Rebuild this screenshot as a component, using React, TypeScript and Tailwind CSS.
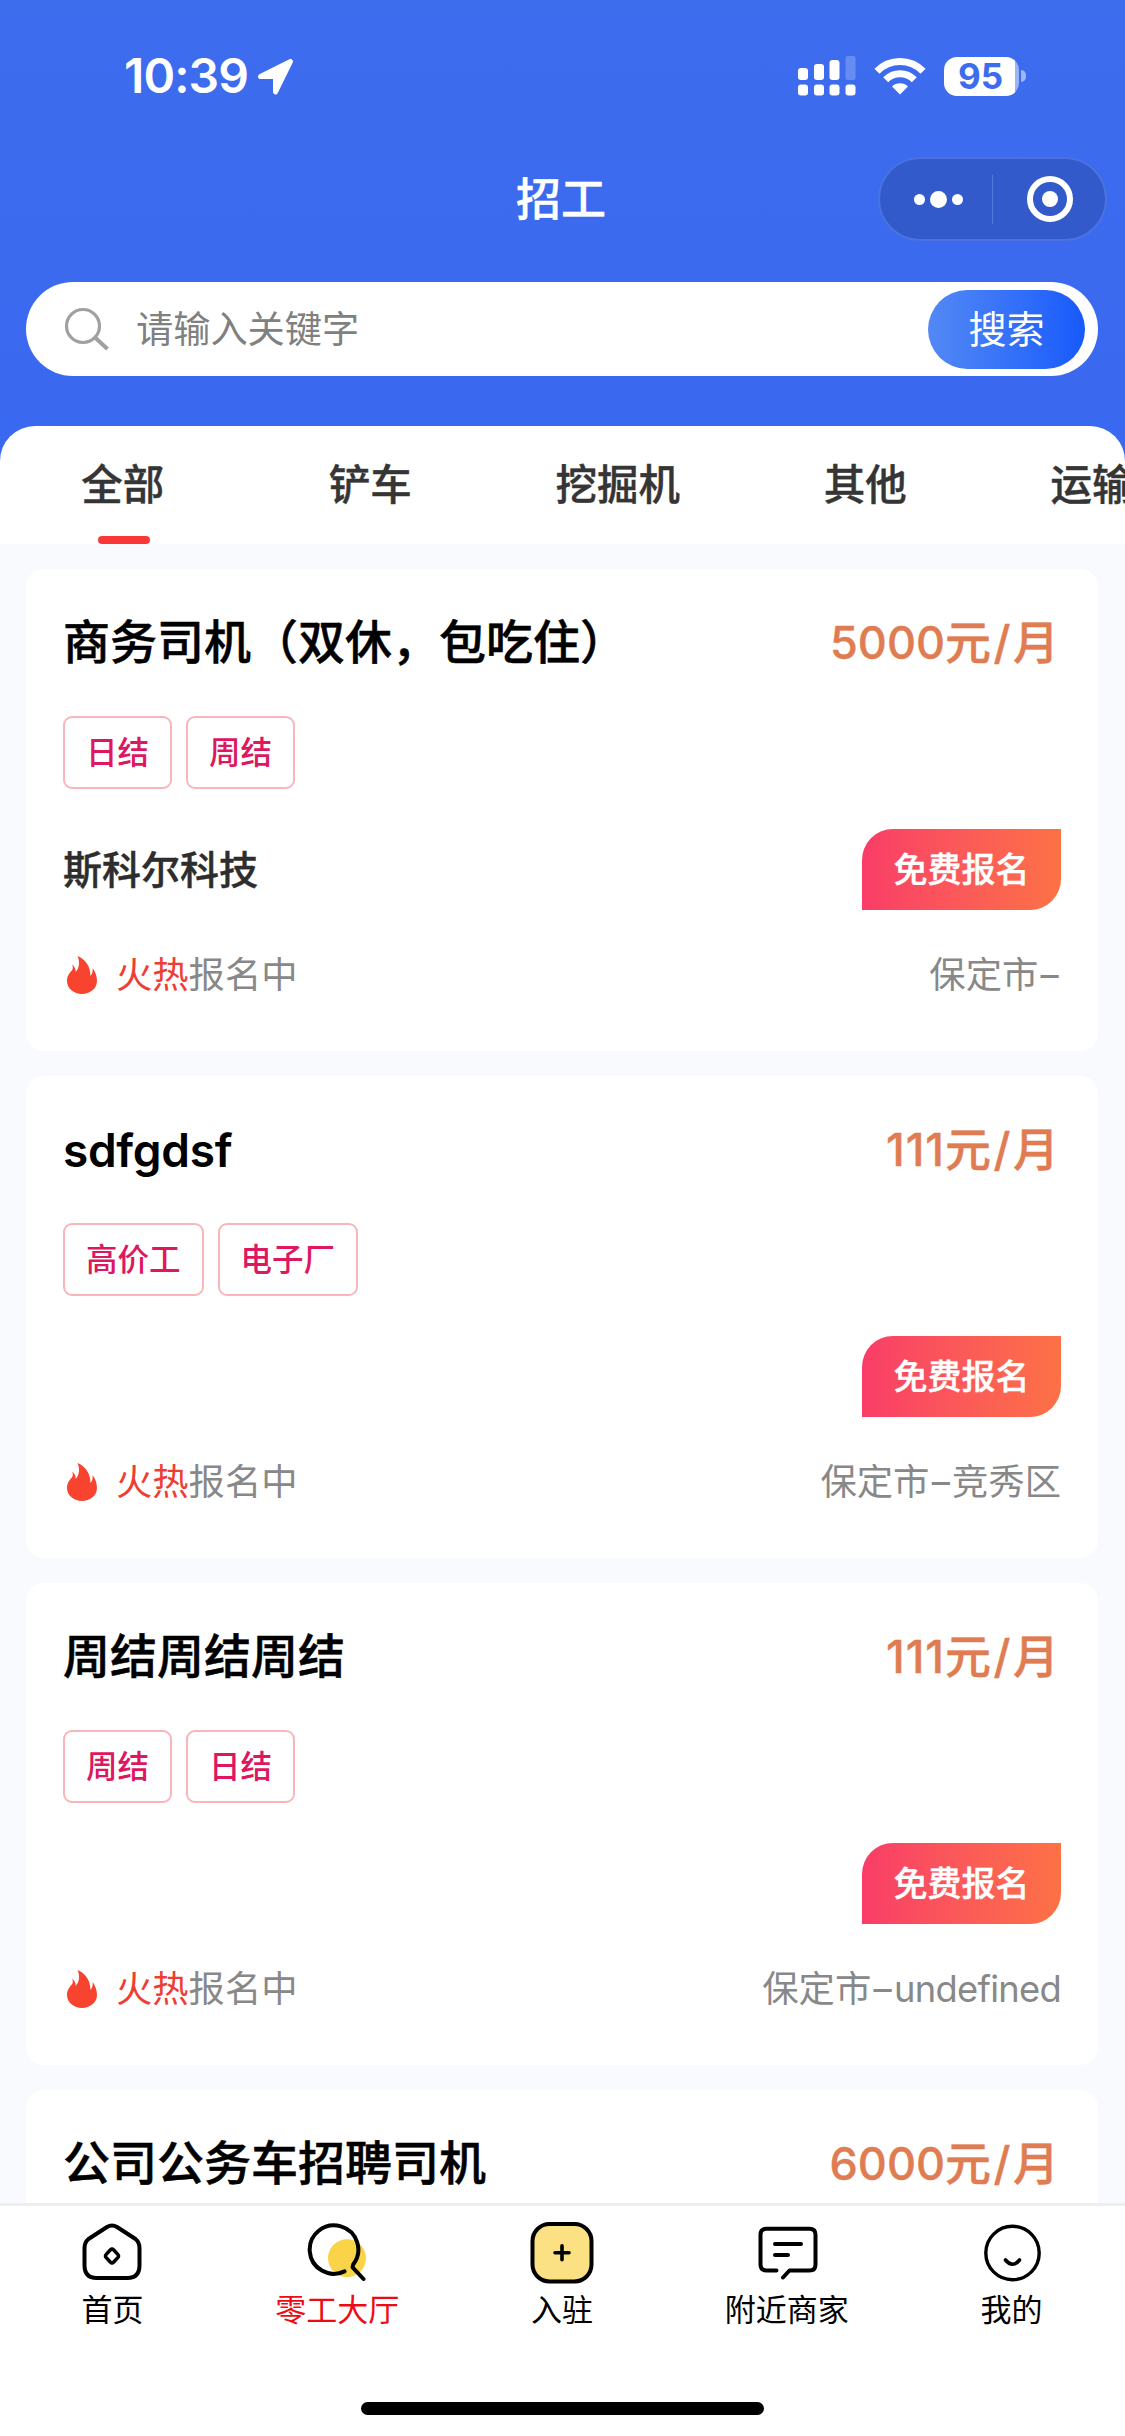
import type { ReactNode } from "react";

type Job = {
  title: string;
  amount: string;
  tags: string[];
  company: string;
  area: string;
};

const jobs: Job[] = [
  { title: "商务司机（双休，包吃住）", amount: "5000", tags: ["日结", "周结"], company: "斯科尔科技", area: "" },
  { title: "sdfgdsf", amount: "111", tags: ["高价工", "电子厂"], company: "", area: "竞秀区" },
  { title: "周结周结周结", amount: "111", tags: ["周结", "日结"], company: "", area: "undefined" },
];

const nextJob = { title: "公司公务车招聘司机", amount: "6000" };

const categories = ["全部", "铲车", "挖掘机", "其他", "运输车"];

function StatusBar() {
  return (
    <div className="flex h-[152px] items-center justify-between pl-[124px] pr-[98px]">
      <div className="flex items-center gap-[8px]">
        <span className="w-[125px] whitespace-nowrap text-[48px] leading-none font-[560] tracking-[-0.9px]">10:39</span>
        <svg width="37" height="37" viewBox="0 0 37 37" fill="#fff" stroke="#fff" strokeWidth="5" strokeLinejoin="round">
          <path d="M33.5 3.5 18.5 34V18.5H3.5Z" />
        </svg>
      </div>
      <div className="flex items-center">
        <svg width="58" height="40" viewBox="0 0 58 40" fill="#fff">
          <rect x="0" y="12" width="10" height="12" rx="3" />
          <rect x="16" y="8" width="10" height="16" rx="3" />
          <rect x="31.500" y="4" width="10" height="20" rx="3" />
          <rect x="47.500" y="0" width="10" height="24" rx="2" opacity=".22" />
          <rect x="0" y="28.500" width="10" height="11" rx="3" />
          <rect x="16" y="28.500" width="10" height="11" rx="3" />
          <rect x="31.500" y="28.500" width="10" height="11" rx="3" />
          <rect x="47.500" y="28.500" width="10" height="11" rx="3" />
        </svg>
        <svg className="ml-[18px]" width="52" height="38" viewBox="0 0 52 38" fill="none" stroke="#fff" strokeWidth="7">
          <path d="M3 14.300a32 32 0 0 1 46 0" />
          <path d="M11.700 22.800a20 20 0 0 1 28.600 0" />
          <path d="M18 29.600a11.500 11.500 0 0 1 16 0L26 37.500Z" fill="#fff" stroke="none" />
        </svg>
        <div className="ml-[18px] flex h-[39px] w-[75px] items-center justify-center rounded-[13px] bg-[linear-gradient(90deg,#fff_95%,#9bb4f6_95%)] pr-[2px] text-[35px] leading-none font-bold text-[#3d6cec]">95</div>
        <div className="ml-[2px] h-[12px] w-[5px] rounded-r-full bg-white/50" />
      </div>
    </div>
  );
}

function TitleBar() {
  return (
    <div className="grid h-[94px] grid-cols-3 items-center pr-[17px]">
      <div />
      <h1 className="pl-[15px] text-center text-[45px] leading-none font-medium [-webkit-text-stroke:0.4px]">招工</h1>
      <div className="flex h-[84px] w-[229px] items-center justify-self-end rounded-full border-2 border-[#4a72e0] bg-[#325aca]">
        <div className="flex w-[112px] items-center justify-center gap-[5px] pl-[5px]">
          <span className="size-[11px] rounded-full bg-white" />
          <span className="size-[17px] rounded-full bg-white" />
          <span className="size-[11px] rounded-full bg-white" />
        </div>
        <div className="h-[49px] w-px bg-[#5377da]" />
        <div className="flex flex-1 items-center justify-center pl-[2px]">
          <span className="flex size-[46px] items-center justify-center rounded-full border-[6px] border-white">
            <span className="size-[16px] rounded-full bg-white" />
          </span>
        </div>
      </div>
    </div>
  );
}

function SearchBar() {
  return (
    <div className="mx-[26px] mt-[36px] flex h-[94px] items-center rounded-full bg-white pl-[38px] pr-[13px]">
      <svg width="46" height="44" viewBox="0 0 46 44" fill="none" stroke="#a0a0a0" strokeWidth="3.200">
        <circle cx="19" cy="19" r="16.500" />
        <path d="m31 30.500 12.500 11.500" strokeWidth="4" />
      </svg>
      <span className="ml-[26px] flex-1 pt-[2px] text-[37.200px] leading-none text-[#808080]">请输入关键字</span>
      <button className="h-[79px] w-[157px] rounded-full bg-linear-to-r from-[#5388f5] to-[#1759fb] text-[38px] leading-none text-white">搜索</button>
    </div>
  );
}

function Flame() {
  return (
    <svg width="30" height="38" viewBox="0 0 30 38" fill="#f8432f">
      <path d="M10.500 0C18 3 23.500 10 23.500 20c1.700-2 2.600-5 2.100-8C28.500 16 30 20.500 30 25 30 32.500 23 38 15 38S0 32.500 0 25c0-5 2.300-7.500 4.800-10.500C6.200 12.800 6.100 10.500 5 8.500c2.500 2 4 4.500 3.700 7.500C12.500 11.500 13 5.500 10.500 0Z" />
    </svg>
  );
}

function JobHeading({ title, amount }: { title: string; amount: string }) {
  return (
    <div className="flex h-[51px] items-center justify-between pr-[2px]">
      <h2 className={/^[a-z]/.test(title) ? "whitespace-nowrap pt-[2px] text-[46px] leading-none font-[570] tracking-[-0.3px] text-black" : "whitespace-nowrap text-[47px] leading-none font-medium text-black [-webkit-text-stroke:0.5px]"}>{title}</h2>
      <span className="whitespace-nowrap text-[46px] leading-none font-medium text-[#e07c52] [-webkit-text-stroke:0.4px]">
        <span className={amount === "111" ? "text-[45px] tracking-[1px]" : "text-[45px]"}>{amount}</span>元<span className="mx-[2.500px]">/</span>月
      </span>
    </div>
  );
}

function JobCard({ job }: { job: Job }) {
  return (
    <article className="h-[482px] shrink-0 rounded-[18px] bg-white px-[37px] pt-[47px]">
      <JobHeading title={job.title} amount={job.amount} />
      <div className="mt-[49px] flex gap-[14px]">
        {job.tags.map((t) => (
          <span key={t} className="flex h-[73px] items-center rounded-[9px] border-2 border-[#f8b6ba] px-[21px] text-[31.500px] leading-none font-medium text-[#dd1760]">{t}</span>
        ))}
      </div>
      <div className="mt-[40px] flex h-[81px] items-center justify-between">
        <span className="text-[39px] leading-none font-medium text-[#2d2d2d] [-webkit-text-stroke:0.4px]">{job.company}</span>
        <button className="h-[81px] w-[199px] rounded-tl-[31px] rounded-br-[31px] bg-linear-to-r from-[#f93c67] to-[#fd7145] text-[34px] leading-none font-medium text-white [-webkit-text-stroke:0.4px]">免费报名</button>
      </div>
      <div className="mt-[42px] flex h-[46px] items-center justify-between text-[36.300px] leading-none text-[#888]">
        <div className="flex items-center pl-[4px]">
          <Flame />
          <span className="ml-[19px] text-[#f03d33]">火热</span>
          <span>报名中</span>
        </div>
        <span>
          保定市<span className="mx-[2.300px]">–</span>
          <span className={job.area === "undefined" ? "tracking-[-0.7px]" : ""}>{job.area}</span>
        </span>
      </div>
    </article>
  );
}

function HomeIcon() {
  return (
    <>
      <path d="M7.500 17 26 5q5-3 10 0L54.500 17q4 3.500 4 9V43q0 13-12 13H15.500Q3.500 56 3.500 43V26q0-5.500 4-9Z" />
      <path d="M29.500 27.700q1.500-1.600 3 0l4.300 4.700q1.400 1.600 0 3.200l-4.300 4.700q-1.500 1.600-3 0l-4.300-4.700q-1.400-1.600 0-3.200Z" strokeWidth="3.500" />
    </>
  );
}

function HallIcon() {
  return (
    <>
      <circle cx="41" cy="36.300" r="19" fill="#f9d448" stroke="none" />
      <path d="M38.500 49.400A24.300 24.200 0 1 1 47.200 42.400L46.600 45.300 57.500 57" />
    </>
  );
}

function JoinIcon() {
  return (
    <>
      <rect x="1.500" y="2" width="59" height="57.500" rx="17" fill="#fbe183" />
      <path d="M31 23.700v14M24 30.700h14" strokeWidth="3.600" />
    </>
  );
}

function ShopIcon() {
  return (
    <>
      <path d="M20.500 48.500H10.500q-6 0-6-6V12.700q0-6 6-6h43q6 0 6 6v29.800q0 6-6 6H33.500l-6.500 7" />
      <path d="M19 22h26M19 33h13" />
    </>
  );
}

function MineIcon() {
  return (
    <>
      <ellipse cx="31.500" cy="31" rx="26.700" ry="26.700" strokeWidth="3.400" />
      <path d="M24.500 38q7 8.500 14 0" strokeWidth="3.600" />
    </>
  );
}

const nav: { label: string; icon: ReactNode; active?: boolean }[] = [
  { label: "首页", icon: <HomeIcon /> },
  { label: "零工大厅", icon: <HallIcon />, active: true },
  { label: "入驻", icon: <JoinIcon /> },
  { label: "附近商家", icon: <ShopIcon /> },
  { label: "我的", icon: <MineIcon /> },
];

export default function App() {
  return (
    <div className="flex h-[2436px] w-[1125px] flex-col overflow-hidden bg-[#f8fafd] font-['Inter','Noto_Sans_CJK_SC',sans-serif]">
      <header className="h-[426px] shrink-0 bg-linear-to-b from-[#3d6ced] to-[#3a69f1] pr-px text-white">
        <StatusBar />
        <TitleBar />
        <SearchBar />
      </header>
      <div className="shrink-0 bg-[#3a69f1]">
        <nav className="flex h-[118px] overflow-hidden rounded-t-[35px] bg-white">
          {categories.map((c, i) => (
            <div key={c} className="flex w-[247.500px] shrink-0 flex-col items-center justify-between pt-[37px]">
              <span className="pr-[2px] text-[41.500px] leading-[44px] font-medium whitespace-nowrap text-[#353535] [-webkit-text-stroke:0.4px]">{c}</span>
              {i === 0 && <span className="h-[8px] w-[52px] rounded-full bg-[#fa3737]" />}
            </div>
          ))}
        </nav>
      </div>
      <main className="flex min-h-0 flex-1 flex-col gap-[25px] overflow-hidden pt-[25px] pr-[27px] pl-[26px]">
        {jobs.map((j) => (
          <JobCard key={j.title} job={j} />
        ))}
        <article className="min-h-0 flex-1 rounded-t-[18px] bg-white px-[37px] pt-[47px]">
          <JobHeading title={nextJob.title} amount={nextJob.amount} />
        </article>
      </main>
      <footer className="flex h-[233px] shrink-0 flex-col border-t-[3px] border-[#eee] bg-white">
        <div className="grid w-[1124px] grid-cols-5 pt-[15px]">
          {nav.map((n) => (
            <div key={n.label} className="flex flex-col items-center">
              <svg width="66" height="66" viewBox="-2 -1 66 66" fill="none" stroke="#000" strokeWidth="4" strokeLinecap="round" strokeLinejoin="round">
                {n.icon}
              </svg>
              <span className={n.active ? "mt-[4px] text-[31px] leading-[38px] text-[#ee0a14]" : "mt-[4px] text-[31px] leading-[38px] text-black"}>{n.label}</span>
            </div>
          ))}
        </div>
        <div className="mt-auto mb-[21px] h-[13px] w-[403px] self-center rounded-full bg-black" />
      </footer>
    </div>
  );
}
